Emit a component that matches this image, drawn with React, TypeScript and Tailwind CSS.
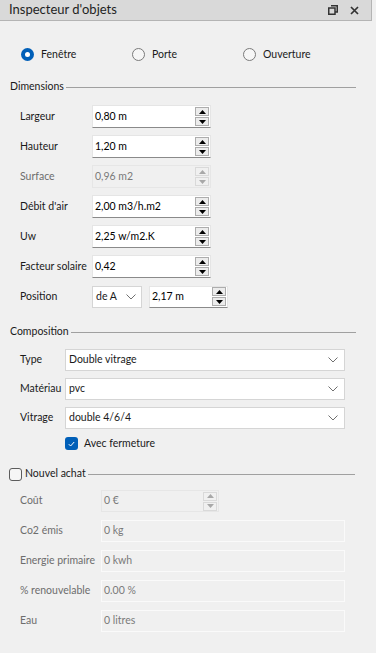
const font = { fontFamily: '"Segoe UI", Lato, "Noto Sans", sans-serif' }

function Spinner({ disabled }: { disabled?: boolean }) {
  const btn = disabled
    ? 'border-[#d9d9d9] bg-[#f0f0f0] text-[#a8a8a8]'
    : 'border-[#adadad] bg-[#ececec] text-black'
  return (
    <div className="flex flex-col gap-[1px] py-[1px] pr-[1px]">
      <div className={`flex h-[9px] w-[14px] items-center justify-center border ${btn}`}>
        <svg width="7" height="4" viewBox="0 0 7 4"><path d="M3.5 0L7 4H0z" fill="currentColor" /></svg>
      </div>
      <div className={`flex h-[9px] w-[14px] items-center justify-center border ${btn}`}>
        <svg width="7" height="4" viewBox="0 0 7 4"><path d="M0 0h7L3.5 4z" fill="currentColor" /></svg>
      </div>
    </div>
  )
}

function SpinInput({ value, disabled, width = 'w-[119px]' }: { value: string; disabled?: boolean; width?: string }) {
  return (
    <div
      className={`flex h-full shrink-0 items-center justify-between ${width} ${
        disabled
          ? 'border border-[#e6e6e6] bg-[#f0f0f0] text-[#7a7a7a]'
          : 'border border-[#e5e5e5] border-b-[#8a8a8a] bg-white text-black'
      }`}
    >
      <span className="pl-[2px]">{value}</span>
      <Spinner disabled={disabled} />
    </div>
  )
}

function Chevron() {
  return (
    <svg width="10" height="6" viewBox="0 0 10 6" className="text-[#707070]">
      <path d="M0.5 0.5L5 5L9.5 0.5" fill="none" stroke="currentColor" strokeWidth="1" />
    </svg>
  )
}

function Select({ value, width }: { value: string; width: string }) {
  return (
    <div className={`flex h-full shrink-0 items-center justify-between border border-[#d5d5d5] bg-white pl-[3px] pr-[6px] ${width}`}>
      <span>{value}</span>
      <Chevron />
    </div>
  )
}

function Legend({ children }: { children: React.ReactNode }) {
  return (
    <div className="flex h-[14px] w-[346px] items-center gap-[2px]">
      <div className="flex items-center gap-[4px]">{children}</div>
      <div className="h-px flex-1 bg-[#a0a0a0]" />
    </div>
  )
}

function Radio({ checked, label }: { checked?: boolean; label: string }) {
  return (
    <div className="flex items-center gap-[7px]">
      {checked ? (
        <div className="flex h-[13px] w-[13px] items-center justify-center rounded-full bg-[#005fb8]">
          <div className="h-[5px] w-[5px] rounded-full bg-white" />
        </div>
      ) : (
        <div className="h-[13px] w-[13px] rounded-full border border-[#7a7a7a] bg-[#f6f6f6]" />
      )}
      <span>{label}</span>
    </div>
  )
}

const dims = [
  { label: 'Largeur', value: '0,80 m' },
  { label: 'Hauteur', value: '1,20 m' },
  { label: 'Surface', value: '0,96 m2', disabled: true },
  { label: "Débit d'air", value: '2,00 m3/h.m2' },
  { label: 'Uw', value: '2,25 w/m2.K' },
  { label: 'Facteur solaire', value: '0,42' },
]

const compo = [
  { label: 'Type', value: 'Double vitrage' },
  { label: 'Matériau', value: 'pvc' },
  { label: 'Vitrage', value: 'double 4/6/4' },
]

const achat = [
  { label: 'Co2 émis', value: '0 kg' },
  { label: 'Energie primaire', value: '0 kwh' },
  { label: '% renouvelable', value: '0.00 %' },
  { label: 'Eau', value: '0 litres' },
]

export default function App() {
  return (
    <div className="h-[653px] w-[376px] overflow-hidden whitespace-nowrap bg-[#f0f0f0] text-[10.5px] text-[#1a1a1a]" style={font}>
      {/* title bar */}
      <div className="mr-[4px] flex h-[21px] items-center justify-between border-b border-r border-[#b4b4b4] bg-[#d9d9d9] pl-[9px] pr-[12px]">
        <span className="text-[13px] text-[#1f1f1f]">Inspecteur d'objets</span>
        <div className="flex items-center gap-[12px] text-[#333]">
          <svg width="10" height="10" viewBox="0 0 10 10">
            <path d="M3 0.75H9.25V7H7M0.75 3H7V9.25H0.75Z" fill="none" stroke="currentColor" strokeWidth="1.5" />
          </svg>
          <svg width="9" height="9" viewBox="0 0 9 9">
            <path d="M1 1L8 8M8 1L1 8" stroke="currentColor" strokeWidth="1.7" />
          </svg>
        </div>
      </div>

      {/* radios */}
      <div className="mt-[26px] grid h-[14px] grid-cols-[111px_111px_111px] items-center pl-[21px]">
        <Radio checked label="Fenêtre" />
        <Radio label="Porte" />
        <Radio label="Ouverture" />
      </div>

      {/* Dimensions */}
      <div className="mt-[19px] pl-[10px]">
        <Legend>Dimensions</Legend>
        <div className="mt-[11px] flex flex-col gap-[7px] pl-[10px]">
          {dims.map((d) => (
            <div key={d.label} className="flex h-[23px] items-center">
              <span className={`w-[72px] shrink-0 ${d.disabled ? 'text-[#6d6d6d]' : ''}`}>{d.label}</span>
              <SpinInput value={d.value} disabled={d.disabled} />
            </div>
          ))}
          <div className="flex h-[23px] items-center">
            <span className="w-[72px] shrink-0">Position</span>
            <div className="flex h-[22px] gap-[7px]">
              <div className="flex h-full w-[50px] items-center justify-between border border-[#d5d5d5] bg-white pl-[3px] pr-[5px]">
                <span>de A</span>
                <Chevron />
              </div>
              <SpinInput value="2,17 m" width="w-[79px]" />
            </div>
          </div>
        </div>
      </div>

      {/* Composition */}
      <div className="mt-[17px] pl-[10px]">
        <Legend>Composition</Legend>
        <div className="mt-[10px] flex flex-col gap-[7px] pl-[10px]">
          {compo.map((c) => (
            <div key={c.label} className="flex h-[22px] items-center">
              <span className="w-[45px] shrink-0">{c.label}</span>
              <Select value={c.value} width="w-[280px]" />
            </div>
          ))}
        </div>
        <div className="mt-[8px] flex h-[13px] items-center gap-[6px] pl-[55px]">
          <div className="flex h-[13px] w-[13px] items-center justify-center rounded-[3px] bg-[#005fb8]">
            <svg width="7" height="6" viewBox="0 0 7 6">
              <path d="M0.8 3.2L2.6 5L6.2 1" fill="none" stroke="white" strokeWidth="1" />
            </svg>
          </div>
          <span>Avec fermeture</span>
        </div>
      </div>

      {/* Nouvel achat */}
      <div className="mt-[17px] pl-[9px]">
        <Legend>
          <div className="h-[13px] w-[13px] rounded-[3px] border border-[#5c5c5c] bg-[#f6f6f6]" />
          <span className="-ml-[1px]">Nouvel achat</span>
        </Legend>
        <div className="mt-[9px] flex flex-col gap-[8px] pl-[11px] text-[#6d6d6d]">
          <div className="flex h-[22px] items-center">
            <span className="w-[81px] shrink-0">Coût</span>
            <SpinInput value="0 €" disabled width="w-[118px]" />
          </div>
          {achat.map((a) => (
            <div key={a.label} className="flex h-[22px] items-center">
              <span className="w-[81px] shrink-0">{a.label}</span>
              <div className="flex h-full w-[244px] shrink-0 items-center border border-[#fafafa] bg-[#f0f0f0] pl-[2px] text-[#7a7a7a]">
                {a.value}
              </div>
            </div>
          ))}
        </div>
      </div>
    </div>
  )
}
